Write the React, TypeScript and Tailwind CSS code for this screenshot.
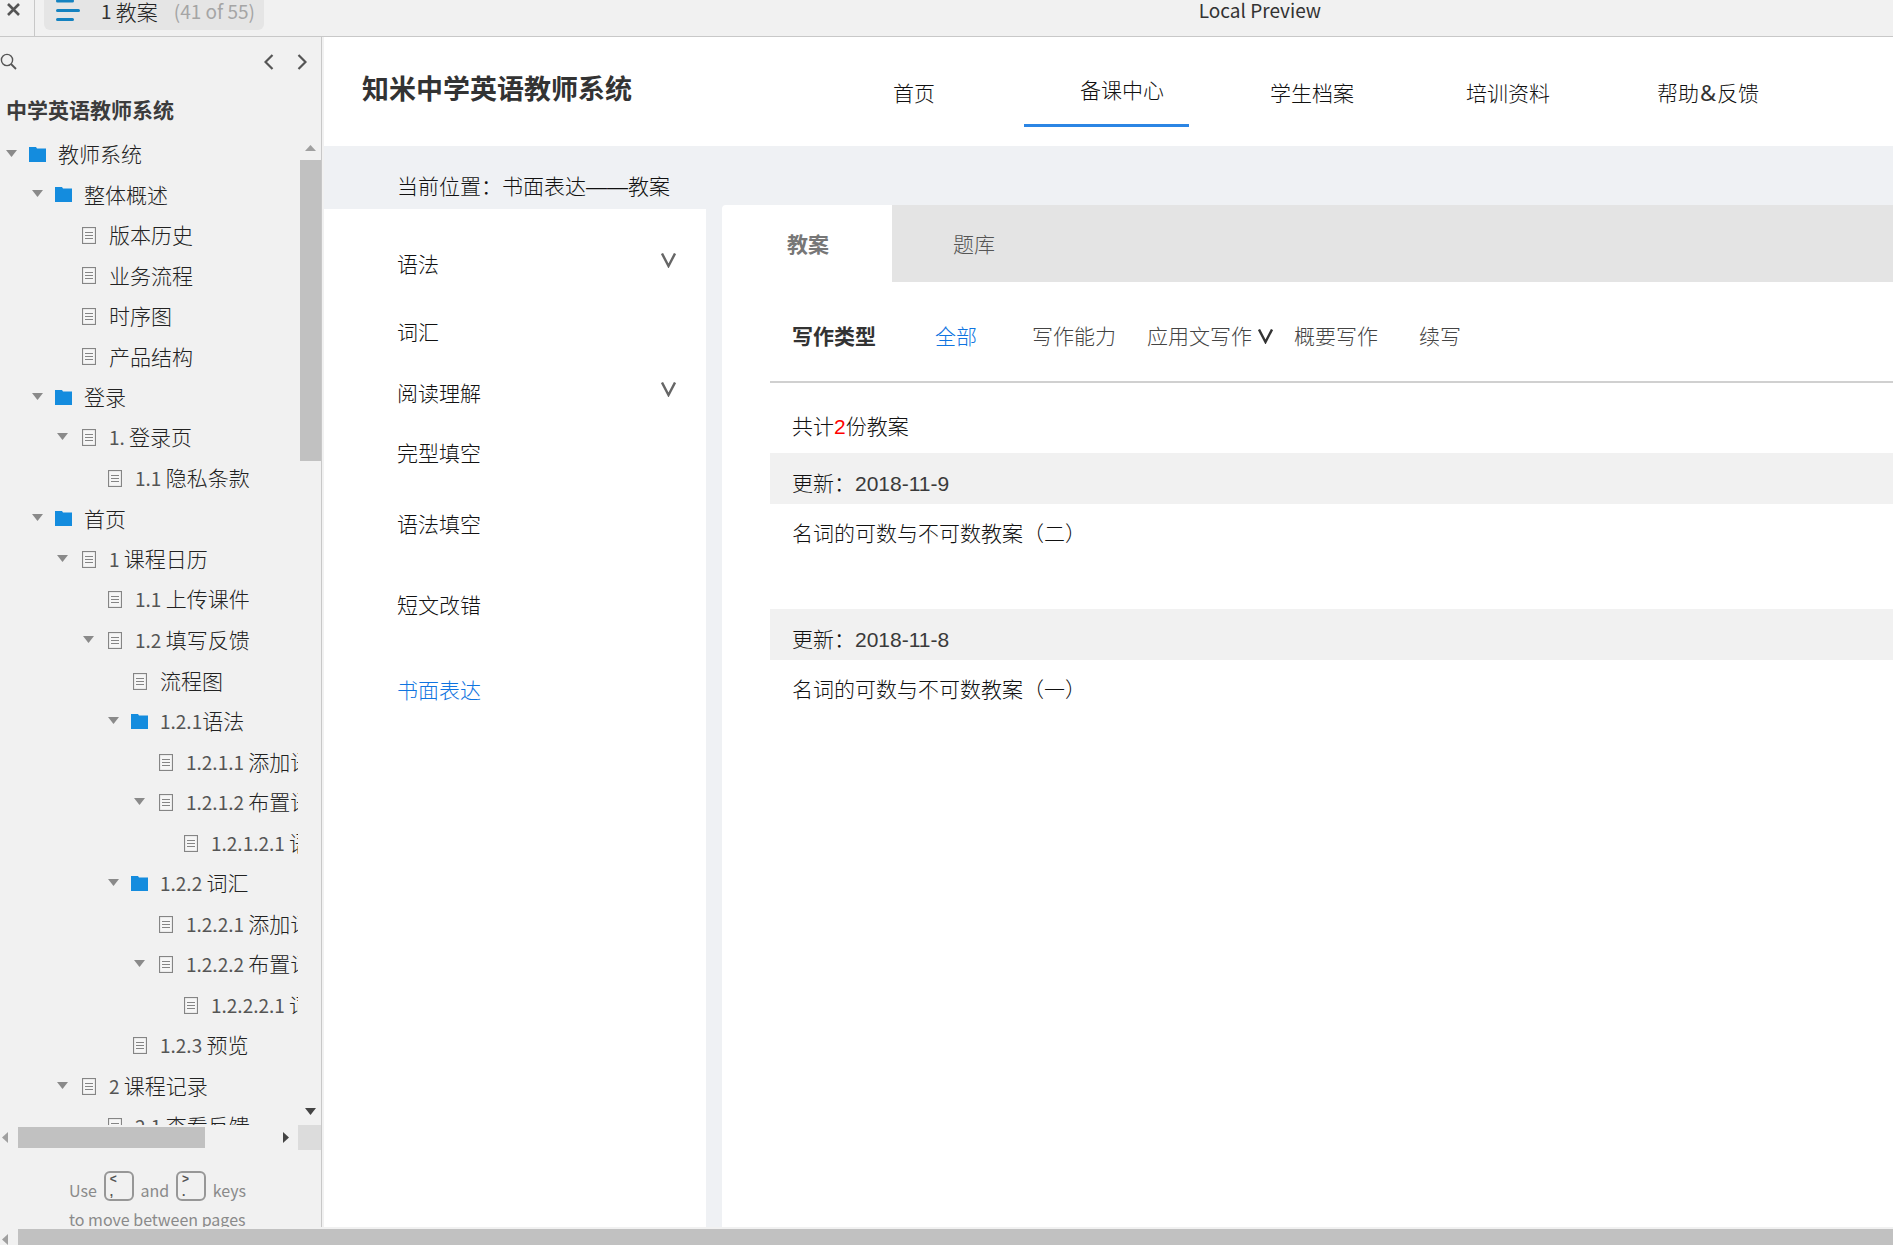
type TreeItem = {
  level: number;
  kind: "folder" | "page";
  open?: boolean;
  no?: string;
  title: string;
};

const TREE: TreeItem[] = [
  { level: 0, kind: "folder", open: true, title: "教师系统" },
  { level: 1, kind: "folder", open: true, title: "整体概述" },
  { level: 2, kind: "page", title: "版本历史" },
  { level: 2, kind: "page", title: "业务流程" },
  { level: 2, kind: "page", title: "时序图" },
  { level: 2, kind: "page", title: "产品结构" },
  { level: 1, kind: "folder", open: true, title: "登录" },
  { level: 2, kind: "page", open: true, no: "1. ", title: "登录页" },
  { level: 3, kind: "page", no: "1.1 ", title: "隐私条款" },
  { level: 1, kind: "folder", open: true, title: "首页" },
  { level: 2, kind: "page", open: true, no: "1 ", title: "课程日历" },
  { level: 3, kind: "page", no: "1.1 ", title: "上传课件" },
  { level: 3, kind: "page", open: true, no: "1.2 ", title: "填写反馈" },
  { level: 4, kind: "page", title: "流程图" },
  { level: 4, kind: "folder", open: true, no: "1.2.1", title: "语法" },
  { level: 5, kind: "page", no: "1.2.1.1 ", title: "添加语法" },
  { level: 5, kind: "page", open: true, no: "1.2.1.2 ", title: "布置语法" },
  { level: 6, kind: "page", no: "1.2.1.2.1 ", title: "语法" },
  { level: 4, kind: "folder", open: true, no: "1.2.2 ", title: "词汇" },
  { level: 5, kind: "page", no: "1.2.2.1 ", title: "添加词汇" },
  { level: 5, kind: "page", open: true, no: "1.2.2.2 ", title: "布置词汇" },
  { level: 6, kind: "page", no: "1.2.2.2.1 ", title: "词汇" },
  { level: 4, kind: "page", no: "1.2.3 ", title: "预览" },
  { level: 2, kind: "page", open: true, no: "2 ", title: "课程记录" },
  { level: 3, kind: "page", no: "2.1 ", title: "查看反馈" },
];

const INDENT = [
  "pl-[6px]",
  "pl-[32px]",
  "pl-[57px]",
  "pl-[83px]",
  "pl-[108px]",
  "pl-[134px]",
  "pl-[159px]",
];

const CATEGORIES = [
  { title: "语法", space: "mt-[42px]", expandable: true, align: "items-start" },
  { title: "词汇", space: "mt-[40px]", align: "items-center" },
  { title: "阅读理解", space: "mt-[33px]", expandable: true, align: "items-start" },
  { title: "完型填空", space: "mt-[32px]", align: "items-center" },
  { title: "语法填空", space: "mt-[43px]", align: "items-center" },
  { title: "短文改错", space: "mt-[53px]", align: "items-center" },
  { title: "书面表达", space: "mt-[57px]", active: true, align: "items-center" },
];

const LESSONS = [
  { date: "2018-11-9", title: "名词的可数与不可数教案（二）" },
  { date: "2018-11-8", title: "名词的可数与不可数教案（一）" },
];

function Triangle({ dir, className }: { dir: "up" | "down" | "left" | "right"; className: string }) {
  const points = {
    up: "0,6 11,6 5.5,0",
    down: "0,0 11,0 5.5,7",
    left: "6,0 6,11 0,5.5",
    right: "0,0 0,11 6,5.5",
  }[dir];
  const wide = dir === "up" || dir === "down";
  return (
    <svg width={wide ? 11 : 6} height={wide ? 7 : 11} className={className} aria-hidden="true">
      <polygon points={points} fill="currentColor" />
    </svg>
  );
}

function FolderIcon() {
  return (
    <svg width="17" height="15" viewBox="0 0 17 15" aria-hidden="true">
      <path d="M0 0h7l1 1.5h9V15H0z" fill="#148cde" />
    </svg>
  );
}

function PageIcon() {
  return (
    <svg width="14" height="17" viewBox="0 0 14 17" aria-hidden="true">
      <rect x="0.5" y="0.5" width="13" height="16" fill="#f6f6f6" stroke="#858585" strokeWidth="1.2" />
      <path d="M3 5.5h8M3 8.5h8M3 11.5h8" stroke="#858585" strokeWidth="1.2" />
    </svg>
  );
}

function VMark({ className }: { className: string }) {
  return (
    <svg width="15" height="15" viewBox="0 0 15 15" className={className} aria-hidden="true">
      <path d="M1 0.5L7.5 13L14 0.5" fill="none" stroke="currentColor" strokeWidth="2.4" />
    </svg>
  );
}

function Key({ top, bottom }: { top: string; bottom: string }) {
  return (
    <kbd className="flex h-[30px] w-[30px] flex-col rounded-md border-2 border-[#979797] pl-1 font-['Liberation_Sans',sans-serif] text-[12px] font-bold leading-[13px] text-[#555]">
      <span>{top}</span>
      <span>{bottom}</span>
    </kbd>
  );
}

function TopBar() {
  return (
    <header className="flex h-[37px] shrink-0 items-start border-b border-[#c8c8c8] bg-[#f1f1f1]">
      <div className="flex flex-1">
        <div className="flex h-[36px] w-[35px] border-r border-[#c8c8c8]">
          <button aria-label="Close" className="h-[19px] pl-[7px]">
            <svg width="13" height="13" viewBox="0 0 13 13" aria-hidden="true">
              <path d="M1 1l11 11M12 1L1 12" stroke="#555" strokeWidth="2.6" />
            </svg>
          </button>
        </div>
        <button className="ml-[9px] flex h-[30px] items-start rounded-b-md bg-[#e5e5e5] pl-3 pr-[9px] whitespace-pre text-[#333]">
          <svg width="24" height="22" viewBox="0 0 24 22" className="mr-[21px]" aria-hidden="true">
            <path d="M1.5 1h15M1.5 10.5h21M1.5 19.5h15" stroke="#1482c0" strokeWidth="3" strokeLinecap="round" />
          </svg>
          <span className="text-[19px] leading-[22px]">1 </span>
          <span className="text-[21px] font-light leading-[22px] text-[#222]">教案</span>
          <span className="ml-[16px] text-[19px] leading-[22px] text-[#a5a5a5]">(41 of 55)</span>
        </button>
      </div>
      <h1 className="text-[19px] leading-[19px] text-[#333]">Local Preview</h1>
      <div className="w-[572px]" />
    </header>
  );
}

function Sidebar() {
  return (
    <aside className="flex w-[324px] shrink-0 border-r-2 border-[#f1f1f1] bg-[#f1f1f1]">
      <div className="flex min-w-0 flex-1 flex-col border-r border-[#c8c8c8]">
        <div className="flex h-[49px] shrink-0 items-center">
          <button aria-label="Search">
            <svg width="17" height="17" viewBox="0 0 17 17" aria-hidden="true">
              <circle cx="7" cy="7" r="5.6" fill="none" stroke="#555" strokeWidth="1.4" />
              <path d="M11 11l5 5" stroke="#555" strokeWidth="1.8" />
            </svg>
          </button>
          <button aria-label="Previous page" className="ml-auto">
            <svg width="10" height="16" viewBox="0 0 10 16" aria-hidden="true">
              <path d="M8.5 1L1.5 8l7 7" fill="none" stroke="#555" strokeWidth="2.2" />
            </svg>
          </button>
          <button aria-label="Next page" className="ml-[23px] mr-[14px]">
            <svg width="10" height="16" viewBox="0 0 10 16" aria-hidden="true">
              <path d="M1.5 1l7 7-7 7" fill="none" stroke="#555" strokeWidth="2.2" />
            </svg>
          </button>
        </div>
        <h2 className="h-[47px] shrink-0 pl-[6px] pt-[7px] text-[21px] font-bold leading-8 text-[#3c3c3c]">
          中学英语教师系统
        </h2>

        <div className="flex min-h-0 flex-1">
          <nav className="min-w-0 flex-1 overflow-hidden">
            <ul className="grid h-[1013px] auto-rows-fr">
              {TREE.map((item, i) => (
                <li key={i} className={`flex items-center whitespace-pre ${INDENT[item.level]}`}>
                  <span className="w-[23px] shrink-0 text-[#8a8a8a]">
                    {item.open && <Triangle dir="down" className="" />}
                  </span>
                  <span className={item.kind === "folder" ? "w-[29px] shrink-0 pt-0.5" : "w-[29px] shrink-0 pl-0.5 pt-0.5"}>
                    {item.kind === "folder" ? <FolderIcon /> : <PageIcon />}
                  </span>
                  <a href="#page" className="text-[21px] font-light leading-8 text-[#222]">
                    {item.no && <span className="text-[19px] font-normal text-[#555]">{item.no}</span>}
                    {item.title}
                  </a>
                </li>
              ))}
            </ul>
          </nav>
          <div className="flex w-[23px] shrink-0 flex-col items-end">
            <Triangle dir="up" className="mr-[5px] mt-[12px] shrink-0 text-[#a0a0a0]" />
            <div className="mt-2 h-[301px] w-[21px] bg-[#c1c1c1]" />
            <Triangle dir="down" className="mb-[10px] mr-[5px] mt-auto shrink-0 text-[#444]" />
          </div>
        </div>

        <div className="flex h-[25px] shrink-0 items-center">
          <Triangle dir="left" className="ml-[2px] text-[#a0a0a0]" />
          <div className="ml-[10px] h-[21px] w-[187px] bg-[#c1c1c1]" />
          <Triangle dir="right" className="ml-auto mr-[9px] text-[#444]" />
          <div className="h-full w-[23px] bg-[#dcdcdc]" />
        </div>

        <div className="h-[77px] shrink-0 overflow-hidden pl-[69px] pt-[21px] text-[16px] text-[#8a8a8a]">
          <p className="flex h-[34px] w-[177px] items-start justify-between">
            <span className="pt-[7px]">Use</span>
            <Key top="<" bottom="," />
            <span className="pt-[7px]">and</span>
            <Key top=">" bottom="." />
            <span className="pt-[7px]">keys</span>
          </p>
          <p className="leading-[28px]">to move between pages</p>
        </div>
      </div>
    </aside>
  );
}

function SiteHeader() {
  return (
    <div className="flex h-[109px] shrink-0 bg-white pl-[38px] text-[21px] font-light text-[#111]">
      <h2 className="w-[531px] shrink-0 pt-[33px] text-[27px] font-bold leading-10 text-[#333]">
        知米中学英语教师系统
      </h2>
      <nav className="flex h-[90px] items-end leading-8">
        <a href="#home" className="w-[131px] pb-[17px]">
          首页
        </a>
        <a href="#prepare" className="mr-[81px] w-[165px] border-b-3 border-[#2b85e4] pb-[17px] pl-[56px]">
          备课中心
        </a>
        <a href="#students" className="w-[196px] pb-[17px]">
          学生档案
        </a>
        <a href="#training" className="w-[191px] pb-[17px]">
          培训资料
        </a>
        <a href="#help" className="pb-[17px]">
          帮助<span className="px-px font-['Noto_Sans'] text-[22px] font-normal text-[#333]">&amp;</span>反馈
        </a>
      </nav>
    </div>
  );
}

function Categories() {
  return (
    <nav className="mt-1 w-[382px] shrink-0 bg-white">
      <ul className="flex flex-col pl-[73px] pr-[30px] text-[21px] font-light leading-7 text-[#111]">
        {CATEGORIES.map((c) => (
          <li key={c.title} className={`flex justify-between ${c.space} ${c.align}`}>
            <a href="#category" className={c.active ? "text-[#0f74e0]" : ""}>
              {c.title}
            </a>
            {c.expandable && (
              <button aria-label={`展开${c.title}`} className="pt-0.5">
                <VMark className="text-[#666]" />
              </button>
            )}
          </li>
        ))}
      </ul>
    </nav>
  );
}

function Lessons() {
  return (
    <main className="ml-4 flex min-w-0 flex-1 flex-col rounded-tl bg-white text-[21px] font-light text-[#111]">
      <div className="flex h-[77px] shrink-0 leading-8 text-[#555]">
        <button className="w-[170px] shrink-0 pl-[65px] pt-[3px] text-left font-bold text-[#777]">教案</button>
        <div className="flex flex-1 bg-[#e4e4e4]">
          <button className="px-[61px] pt-[3px]">题库</button>
        </div>
      </div>

      <div className="ml-12 flex h-[101px] shrink-0 items-center border-b-2 border-[#d0d0d0] pb-1.5 pl-[22px] pt-4 leading-8 text-[#444]">
        <h3 className="mr-[59px] font-bold text-[#333]">写作类型</h3>
        <button className="mr-[55px] text-[#0f74e0]">全部</button>
        <button className="mr-[31px]">写作能力</button>
        <button className="mr-[21px] flex items-center gap-[6px]">
          应用文写作
          <VMark className="text-[#333]" />
        </button>
        <button className="mr-[41px]">概要写作</button>
        <button>续写</button>
      </div>

      <p className="ml-12 h-[70px] shrink-0 pl-[22px] pt-[28px] leading-8">
        共计<span className="font-normal text-[#f00]">2</span>份教案
      </p>
      {LESSONS.map((l) => (
        <section key={l.date} className="ml-12 h-[156px] shrink-0">
          <h4 className="h-[51px] bg-[#f1f1f1] pl-[22px] pt-[15px] leading-8">
            更新：<span className="font-normal text-[#3a3a3a]">{l.date}</span>
          </h4>
          <a href="#lesson" className="block pl-[22px] pt-[14px] leading-8">
            {l.title}
          </a>
        </section>
      ))}
    </main>
  );
}

export default function App() {
  return (
    <div className="flex h-screen flex-col overflow-hidden bg-[#f1f1f1] font-['Noto_Sans_CJK_SC',sans-serif]">
      <TopBar />
      <div className="flex min-h-0 flex-1">
        <Sidebar />
        <div className="flex min-w-0 flex-1 flex-col bg-[#eff1f4] font-['Liberation_Sans','Noto_Sans_CJK_SC',sans-serif]">
          <SiteHeader />
          <p className="h-[59px] shrink-0 pl-[73px] pt-[25px] text-[21px] font-light leading-8 text-[#111]">
            当前位置：书面表达——教案
          </p>
          <div className="flex min-h-0 flex-1">
            <Categories />
            <Lessons />
          </div>
        </div>
      </div>
      <div className="flex h-[18px] shrink-0 items-end gap-[10px] pl-[2px]">
        <Triangle dir="left" className="text-[#a0a0a0]" />
        <div className="h-4 flex-1 bg-[#c1c1c1]" />
      </div>
    </div>
  );
}
